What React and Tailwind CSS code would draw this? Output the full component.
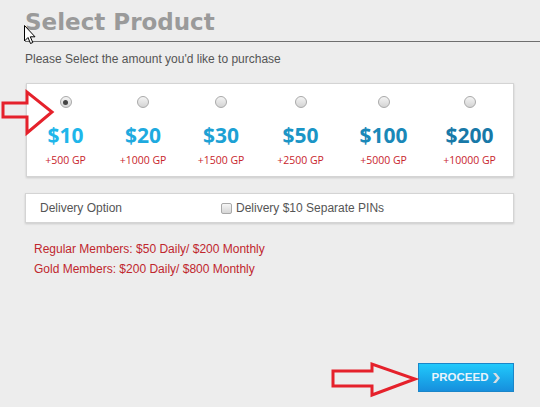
import React, { useState } from 'react';

const products = [
  { amount: '$10', gp: '+500 GP', color: 'text-[#1fb6ea]', w: 'w-[77px]' },
  { amount: '$20', gp: '+1000 GP', color: 'text-[#1eaadf]', w: 'w-[78px]' },
  { amount: '$30', gp: '+1500 GP', color: 'text-[#1da1d4]', w: 'w-[78px]' },
  { amount: '$50', gp: '+2500 GP', color: 'text-[#1b95c6]', w: 'w-[81px]' },
  { amount: '$100', gp: '+5000 GP', color: 'text-[#1a88b8]', w: 'w-[85px]' },
  { amount: '$200', gp: '+10000 GP', color: 'text-[#1879a8]', w: 'w-[87px]' },
];

const Radio = ({ checked }) => (
  <div className="w-[12px] h-[12px] rounded-full border border-[#a9a9a9] bg-gradient-to-b from-[#f4f4f4] to-[#d4d4d4] flex items-center justify-center">
    {checked && <div className="w-[5px] h-[5px] rounded-full bg-[#444]" />}
  </div>
);

const RedArrow = ({ className, points, width, height }) => (
  <svg className={className} width={width} height={height} viewBox={`0 0 ${width} ${height}`}>
    <polygon points={points} fill="none" stroke="#e5212b" strokeWidth="3" strokeLinejoin="miter" />
  </svg>
);

const App = () => {
  const [selected, setSelected] = useState(0);

  return (
    <div className="relative w-[540px] h-[407px] bg-[#ededed] overflow-hidden" style={{ fontFamily: '"Liberation Sans", Arial, sans-serif' }}>
      <div className="pl-[25px]">
        <div className="border-b border-[#6f6f6f] pt-[8px] pb-[5px]">
          <h1 className="text-[23px] leading-[28px] font-bold text-[#9a9a9a]" style={{ fontFamily: '"DejaVu Sans", Verdana, sans-serif' }}>
            Select Product
          </h1>
        </div>
        <p className="mt-[10px] text-[12px] leading-[14px] text-[#555]">
          Please Select the amount you'd like to purchase
        </p>

        <div className="mt-[17px] ml-[1px] w-[488px] bg-white border border-[#d4d4d4] shadow-[0_1px_2px_rgba(0,0,0,0.15)] flex pt-[12px] pb-[9px]">
          {products.map((p, i) => (
            <div key={p.amount} className={`${p.w} flex flex-col items-center cursor-pointer`} onClick={() => setSelected(i)}>
              <Radio checked={selected === i} />
              <div className={`mt-[14px] text-[21px] leading-[26px] font-bold ${p.color}`} style={{ fontFamily: '"Open Sans", sans-serif' }}>
                {p.amount}
              </div>
              <div className="mt-[5px] text-[10.5px] leading-[14px] text-[#c8252c]" style={{ fontFamily: '"Open Sans", sans-serif' }}>
                {p.gp}
              </div>
            </div>
          ))}
        </div>

        <div className="mt-[16px] w-[489px] h-[30px] bg-white border border-[#d4d4d4] shadow-[0_1px_2px_rgba(0,0,0,0.15)] flex items-center text-[12px] text-[#555]">
          <span className="ml-[14px] w-[181px]">Delivery Option</span>
          <span className="w-[11px] h-[11px] border border-[#a9a9a9] rounded-[2px] bg-gradient-to-b from-[#f6f6f6] to-[#d6d6d6]" />
          <span className="ml-[4px]">Delivery $10 Separate PINs</span>
        </div>

        <div className="mt-[16px] pl-[9px] text-[12px] leading-[20px] text-[#c0272d]">
          <div>Regular Members: $50 Daily/ $200 Monthly</div>
          <div>Gold Members: $200 Daily/ $800 Monthly</div>
        </div>

        <div className="mt-[84px] flex justify-end w-[489px]">
          <button className="w-[96px] h-[29px] bg-gradient-to-b from-[#22c9fb] to-[#178fdd] border border-[#1a86c9] flex items-center justify-center gap-[4px] text-[11.5px] font-bold text-[#e9f3fb]">
            PROCEED
            <svg width="8" height="10" viewBox="0 0 8 10">
              <path d="M1 0 L4 0 L8 5 L4 10 L1 10 L5 5 Z" fill="#d8dde2" />
            </svg>
          </button>
        </div>
      </div>

      <RedArrow
        className="absolute left-0 top-[88px]"
        width={56}
        height={50}
        points="3,15 27,15 27,4 52,24 27,45 27,29 3,29"
      />
      <RedArrow
        className="absolute left-[330px] top-[360px]"
        width={90}
        height={40}
        points="3,11 42,11 42,4 85,19 42,35 42,26 3,26"
      />

      <svg className="absolute left-[24px] top-[25px]" width="13" height="20" viewBox="0 0 13 20">
        <path d="M0.5 0.5 L0.5 16 L4 12.5 L6.5 18.5 L8.8 17.5 L6.3 11.8 L11 11.8 Z" fill="#fff" stroke="#000" strokeWidth="1" />
      </svg>
    </div>
  );
};

export default App;
